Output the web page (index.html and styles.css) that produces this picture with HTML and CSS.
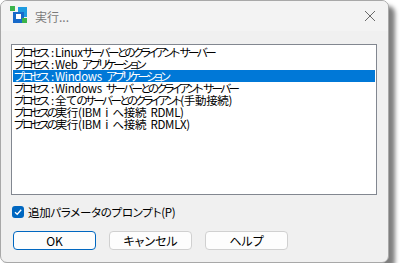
FILE: index.html
```html
<!DOCTYPE html>
<html lang="ja">
<head>
  <meta charset="UTF-8">
  <title>実行...</title>
  <link rel="stylesheet" href="styles.css">
</head>
<body>
  <div class="window">
    <!-- タイトルバー -->
    <div class="titlebar">
      <svg class="app-icon" width="18" height="18" viewBox="0 0 18 18">
        <rect x="0" y="0" width="5" height="5" fill="#3cb44b"/>
        <rect x="8" y="1" width="9" height="10" fill="#1e9be0"/>
        <rect x="3" y="6" width="11" height="11" fill="#1769c9"/>
        <rect x="6" y="8" width="5" height="5" fill="#ffffff"/>
        <rect x="12" y="12" width="5" height="5" fill="#3cb44b"/>
      </svg>
      <span class="title">実行...</span>
      <svg class="close" width="12" height="12" viewBox="0 0 12 12">
        <path d="M1 1 L11 11 M11 1 L1 11" stroke="#6a6a6a" stroke-width="1"/>
      </svg>
    </div>

    <div class="content">
      <!-- プロセス一覧 -->
      <ul class="listbox">
        <li><span class="k">プロセス</span><span class="c">:</span>Linux<span class="k">サーバーとのクライアント サーバー</span></li>
        <li><span class="k">プロセス</span><span class="c">:</span>Web <span class="k">アプリケーション</span></li>
        <li class="selected"><span class="k">プロセス</span><span class="c">:</span>Windows <span class="k">アプリケーション</span></li>
        <li><span class="k">プロセス</span><span class="c">:</span>Windows <span class="k">サーバーとのクライアント サーバー</span></li>
        <li><span class="k">プロセス</span><span class="c">:</span>全て<span class="k">のサーバーとのクライアント</span>(手動接続)</li>
        <li><span class="k">プロセスの</span>実行(IBM i へ接続 RDML)</li>
        <li><span class="k">プロセスの</span>実行(IBM i へ接続 RDMLX)</li>
      </ul>

      <label class="check">
        <span class="box">
          <svg width="10" height="10" viewBox="0 0 10 10">
            <path d="M2 5.2 L4.2 7.3 L8.2 2.8" fill="none" stroke="#fff" stroke-width="1.3"/>
          </svg>
        </span>
        追加パラメータのプロンプト(P)
      </label>

      <div class="buttons">
        <button class="btn default">OK</button>
        <button class="btn">キャンセル</button>
        <button class="btn">ヘルプ</button>
      </div>
    </div>
  </div>
</body>
</html>
```

FILE: styles.css
```css
body {
  margin: 0;
  background-color: #fff;
  font-family: "Noto Sans CJK JP", "Liberation Sans", sans-serif;
}

.window {
  width: 387px;
  height: 261px;
  border: 1px solid #a8a8a8;
  border-radius: 7px;
  background-color: #f0f0f0;
  box-shadow: 6px 6px 4px rgba(0, 0, 0, 0.5);
  display: flex;
  flex-direction: column;
  overflow: hidden;
}

.titlebar {
  height: 30px;
  background-color: #f3f3f3;
  display: flex;
  align-items: center;
  padding: 0 10px 0 9px;
}

.app-icon {
  margin-right: 7px;
  margin-top: -2px;
}

.title {
  font-size: 12px;
  color: #7a7a7a;
  flex: 1;
}

.close {
  margin-right: 2px;
}

.content {
  flex: 1;
  padding: 13px 10px 0 10px;
}

.listbox {
  list-style: none;
  margin: 0;
  padding: 1px;
  width: 362px;
  height: 147px;
  background-color: #fff;
  border: 1px solid #828790;
}

.listbox li {
  height: 12px;
  line-height: 12px;
  font-size: 11.5px;
  padding-left: 1px;
  color: #000;
  white-space: nowrap;
  font-feature-settings: "palt";
  letter-spacing: -0.3px;
  word-spacing: 2px;
}

.listbox li .k {
  letter-spacing: -2.5px;
}

.listbox li .c {
  margin: 0 1px 0 4px;
}

.listbox li.selected {
  background-color: #0078d7;
  color: #fff;
}

.check {
  display: flex;
  align-items: center;
  margin-top: 10px;
  font-size: 11.5px;
  line-height: 14px;
  color: #000;
  font-feature-settings: "palt";
  letter-spacing: -0.3px;
}

.box {
  width: 12px;
  height: 12px;
  border-radius: 3px;
  background-color: #0067c0;
  display: flex;
  align-items: center;
  justify-content: center;
  margin: 0 4px 0 1px;
}

.buttons {
  display: flex;
  gap: 13px;
  margin-top: 12px;
  padding-left: 2px;
}

.btn {
  width: 83px;
  height: 19px;
  padding: 0;
  font-family: "Noto Sans CJK JP", "Liberation Sans", sans-serif;
  font-size: 12px;
  line-height: 15px;
  color: #000;
  background-color: #fdfdfd;
  border: 1px solid #d0d0d0;
  border-radius: 4px;
  font-feature-settings: "palt";
}

.btn.default {
  border: 1px solid #0067c0;
  box-shadow: inset 0 0 0 1px #fdfdfd;
}
```
